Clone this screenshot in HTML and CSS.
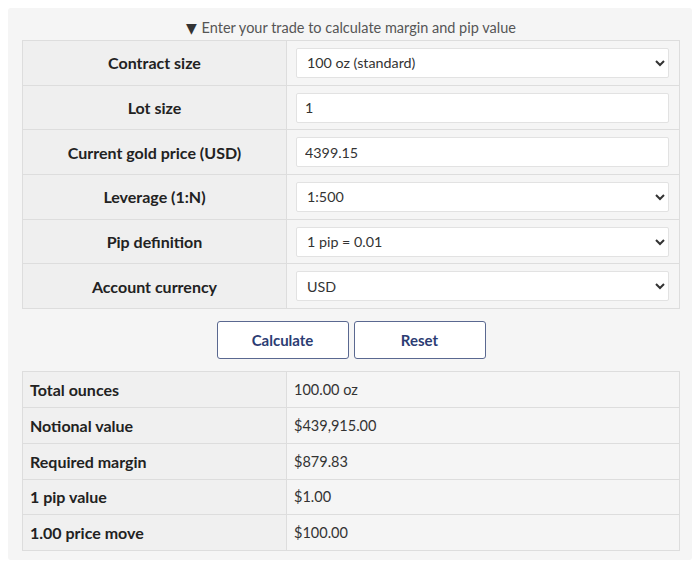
FILE: index.html
```html
<!DOCTYPE html>
<html lang="en">
<head>
<meta charset="UTF-8">
<meta name="viewport" content="width=device-width, initial-scale=1">
<title>Gold margin calculator</title>
<link rel="stylesheet" href="styles.css">
</head>
<body>
<div class="calc">
  <div class="calc-hint"><span class="tri">&#9660;</span> Enter your trade to calculate margin and pip value</div>
  <table class="calc-form">
    <tr>
      <th>Contract size</th>
      <td><select><option>100 oz (standard)</option></select></td>
    </tr>
    <tr>
      <th>Lot size</th>
      <td><input type="text" value="1"></td>
    </tr>
    <tr>
      <th>Current gold price (USD)</th>
      <td><input type="text" value="4399.15"></td>
    </tr>
    <tr>
      <th>Leverage (1:N)</th>
      <td><select><option>1:500</option></select></td>
    </tr>
    <tr>
      <th>Pip definition</th>
      <td><select><option>1 pip = 0.01</option></select></td>
    </tr>
    <tr>
      <th>Account currency</th>
      <td><select><option>USD</option></select></td>
    </tr>
  </table>
  <div class="calc-btns">
    <button class="btn">Calculate</button>
    <button class="btn">Reset</button>
  </div>
  <table class="calc-result">
    <tr><th>Total ounces</th><td>100.00 oz</td></tr>
    <tr><th>Notional value</th><td>$439,915.00</td></tr>
    <tr><th>Required margin</th><td>$879.83</td></tr>
    <tr><th>1 pip value</th><td>$1.00</td></tr>
    <tr><th>1.00 price move</th><td>$100.00</td></tr>
  </table>
</div>
</body>
</html>
```

FILE: styles.css
```css
body{
  margin: 8px;
  background: #fff;
  font-family: "Lato", "Noto Sans", sans-serif;
  color: #222;
}
.calc{
  width: 658px;
  background: #f5f5f5;
  padding: 11px 12px 9px 14px;
  border-radius: 3px;
}
.calc-hint{
  text-align: center;
  font-size: 14.5px;
  color: #555;
  height: 18px;
  line-height: 18px;
  margin-bottom: 3px;
}
.tri{
  font-family: "DejaVu Sans", sans-serif;
  font-size: 14px;
  line-height: 0;
  color: #333;
  margin-right: 1px;
}
table{
  width: 658px;
  border-collapse: collapse;
  border: 1px solid #ddd;
}
th, td{
  border: 1px solid #ddd;
  padding: 0;
}
.calc-form th{
  width: 263px;
  height: 43.7px;
  background: #efefef;
  font-size: 16px;
  font-weight: bold;
  color: #222;
  text-align: center;
}
.calc-form td{
  padding: 0 10px 0 9px;
  background: #f5f5f5;
}
.calc-form select,
.calc-form input{
  display: block;
  box-sizing: border-box;
  width: 100%;
  height: 30px;
  border: 1px solid #e2e2e2;
  border-radius: 2px;
  background: #fff;
  font-family: inherit;
  font-size: 14.3px;
  color: #333;
  padding: 0 8px;
}
.calc-form select{
  padding-left: 6px;
}
.calc-btns{
  display: flex;
  justify-content: center;
  gap: 5px;
  margin: 12px 0 12px;
}
.btn{
  width: 132px;
  height: 38px;
  background: #fff;
  border: 1px solid #5a6890;
  border-radius: 3px;
  color: #2b3c73;
  font-family: inherit;
  font-size: 15px;
  font-weight: bold;
}
.calc-result th,
.calc-result td{
  height: 34.8px;
  padding: 0 7px;
  text-align: left;
}
.calc-result th{
  width: 249px;
  background: #f0f0f0;
  font-size: 16px;
  font-weight: bold;
  color: #222;
}
.calc-result td{
  background: #f5f5f5;
  font-size: 14.5px;
  color: #333;
}
```
